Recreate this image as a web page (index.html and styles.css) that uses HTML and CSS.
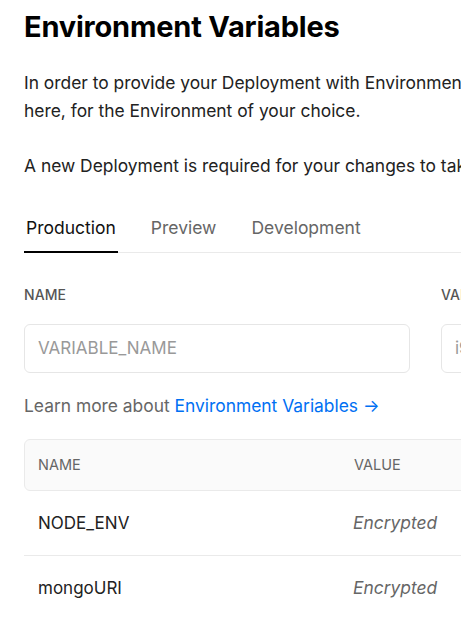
FILE: index.html
```html
<!DOCTYPE html>
<html lang="en">
<head>
<meta charset="utf-8">
<title>Environment Variables</title>
<link rel="stylesheet" href="styles.css">
</head>
<body>
<main class="page">
  <h1 class="title">Environment Variables</h1>
  <p class="text">In order to provide your Deployment with Environment Variables at Build and Runtime, you may enter them right<br>here, for the Environment of your choice.</p>
  <p class="text">A new Deployment is required for your changes to take effect.</p>

  <nav class="tabs">
    <span class="tab active">Production</span>
    <span class="tab">Preview</span>
    <span class="tab">Development</span>
  </nav>

  <div class="form-row">
    <label class="field name-field">
      <span class="label">NAME</span>
      <input class="input" type="text" placeholder="VARIABLE_NAME">
    </label>
    <label class="field value-field">
      <span class="label">VALUE</span>
      <input class="input" type="text" placeholder="i9JU23NF394R6HH">
    </label>
  </div>

  <p class="learn">Learn more about <a class="link" href="#">Environment Variables →</a></p>

  <div class="table">
    <div class="thead">
      <span class="col-name">NAME</span>
      <span class="col-value">VALUE</span>
      <span class="col-date">UPDATED</span>
    </div>
    <div class="row">
      <span class="col-name">NODE_ENV</span>
      <span class="col-value enc">Encrypted</span>
      <span class="col-date">2d ago</span>
    </div>
    <div class="row">
      <span class="col-name">mongoURI</span>
      <span class="col-value enc">Encrypted</span>
      <span class="col-date">2d ago</span>
    </div>
  </div>
</main>
</body>
</html>
```

FILE: styles.css
```css
html, body {
  margin: 0;
  padding: 0;
  background: #fff;
  overflow: hidden;
}
body {
  font-family: Inter, "Noto Sans", sans-serif;
  color: #111;
}
.page {
  width: 1000px;
  padding: 8px 0 0 24px;
  box-sizing: border-box;
}
.title {
  margin: 0;
  font-size: 29px;
  line-height: 38px;
  font-weight: 700;
  letter-spacing: -0.2px;
  color: #000;
}
.text {
  margin: 23px 0 0;
  font-size: 17.4px;
  line-height: 27.5px;
  color: #222;
  white-space: nowrap;
}
.text + .text {
  margin-top: 28px;
}
.tabs {
  display: flex;
  margin-top: 36px;
  border-bottom: 1px solid #eaeaea;
  width: 876px;
}
.tab {
  font-size: 17.5px;
  line-height: 24px;
  padding: 0 2px 11px 2px;
  margin-right: 31px;
  color: #666;
  margin-bottom: -1px;
  border-bottom: 2px solid transparent;
}
.tab.active {
  color: #111;
  border-bottom-color: #000;
}
.form-row {
  display: flex;
  gap: 31px;
  margin-top: 34px;
}
.field {
  display: flex;
  flex-direction: column;
}
.name-field { width: 386px; }
.value-field { width: 386px; }
.label {
  font-size: 14px;
  line-height: 16px;
  font-weight: 500;
  color: #555;
  letter-spacing: 0.1px;
}
.input {
  margin-top: 21px;
  height: 49px;
  box-sizing: border-box;
  border: 1px solid #e6e6e6;
  border-radius: 6px;
  padding: 0 13px;
  font-family: Inter, "Noto Sans", sans-serif;
  font-size: 17px;
  color: #111;
  outline: none;
}
.input::placeholder {
  color: #999;
}
.learn {
  margin: 21px 0 0;
  font-size: 17.4px;
  line-height: 24px;
  color: #666;
}
.link {
  color: #0070f3;
  text-decoration: none;
}
.table {
  margin-top: 21px;
  width: 860px;
}
.thead {
  display: flex;
  align-items: center;
  height: 52px;
  box-sizing: border-box;
  background: #fafafa;
  border: 1px solid #eaeaea;
  border-radius: 6px;
  padding: 0 13px;
  font-size: 14.5px;
  color: #666;
}
.row {
  display: flex;
  align-items: center;
  height: 64px;
  padding: 0 14px;
  font-size: 17px;
  color: #222;
}
.row + .row {
  border-top: 1px solid #eaeaea;
}
.col-name {
  width: 315px;
}
.thead .col-name { width: 316px; }
.col-value {
  width: 300px;
}
.enc {
  font-style: italic;
  font-size: 17.4px;
  color: #666;
}
```
